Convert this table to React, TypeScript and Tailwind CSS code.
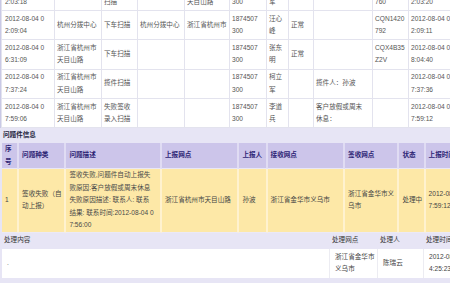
import React from "react";

type Cell = React.ReactNode;

const topRows: Cell[][] = [
  [
    <>2012-08-04 0<br />2:03:18</>,
    "杭州分拨中心",
    <>装车发件<br />扫描</>,
    "",
    <>浙江省杭州市<br />天目山路</>,
    <>1874507<br />300</>,
    <>柯立<br />军</>,
    "正常",
    "",
    <>CQN1418<br />760</>,
    <>2012-08-04 0<br />2:03:20</>,
  ],
  [
    <>2012-08-04 0<br />2:09:04</>,
    "杭州分拨中心",
    "下车扫描",
    "杭州分拨中心",
    "浙江省杭州市",
    <>1874507<br />300</>,
    <>汪心<br />峰</>,
    "正常",
    "",
    <>CQN1420<br />792</>,
    <>2012-08-04 0<br />2:09:11</>,
  ],
  [
    <>2012-08-04 0<br />6:31:09</>,
    <>浙江省杭州市<br />天目山路</>,
    "下车扫描",
    "",
    "",
    <>1874507<br />300</>,
    <>张东<br />明</>,
    "正常",
    "",
    <>CQX4B35<br />Z2V</>,
    <>2012-08-04 0<br />8:04:40</>,
  ],
  [
    <>2012-08-04 0<br />7:37:24</>,
    <>浙江省杭州市<br />天目山路</>,
    "揽件扫描",
    "",
    "",
    <>1874507<br />300</>,
    <>柯立<br />军</>,
    "",
    "揽件人：孙波",
    "",
    <>2012-08-04 0<br />7:37:36</>,
  ],
  [
    <>2012-08-04 0<br />7:59:06</>,
    <>浙江省杭州市<br />天目山路</>,
    <>失败签收<br />录入扫描</>,
    "",
    "",
    <>1874507<br />300</>,
    <>李道<br />兵</>,
    "",
    <>客户放假或周末<br />休息：</>,
    "",
    <>2012-08-04 0<br />7:59:12</>,
  ],
];

const topCols = [
  "w-[52px]",
  "w-[46px]",
  "w-[35px]",
  "w-[46px]",
  "w-[44px]",
  "w-[36px]",
  "w-[21px]",
  "w-[24px]",
  "w-[58px]",
  "w-[35px]",
  "w-[60px]",
];

const probCols = [
  "w-[17px]",
  "w-[47px]",
  "w-[95px]",
  "w-[77px]",
  "w-[28px]",
  "w-[77px]",
  "w-[54px]",
  "w-[26px]",
  "w-[60px]",
];

const probHead: Cell[] = [
  <>序<br />号</>,
  "问题种类",
  "问题描述",
  "上报网点",
  "上报人",
  "接收网点",
  "签收网点",
  "状态",
  "上报时间",
];

const probRow: Cell[] = [
  "1",
  <>签收失败（自<br />动上报）</>,
  <>
    签收失败,问题件自动上报失
    <br />
    败原因:客户放假或周末休息
    <br />
    失败原因描述: 联系人: 联系
    <br />
    结果: 联系时间:2012-08-04 0
    <br />
    7:56:00
  </>,
  "浙江省杭州市天目山路",
  "孙波",
  "浙江省金华市义乌市",
  <>浙江省金华市义<br />乌市</>,
  "处理中",
  <>2012-08-04 0<br />7:59:12</>,
];

export default function App() {
  return (
    <div className="w-[450px] h-[283px] overflow-hidden bg-white font-['Liberation_Sans','Noto_Sans_CJK_SC',sans-serif] text-[6.6px] leading-[12.5px] text-[#555]">
      <div className="border-l-[1.5px] border-[#c9c9e6]">
        <table className="table-fixed border-separate border-spacing-[1px] bg-[#e3e3ee] w-[469px] -mt-[19.3px]">
          <colgroup>
            {topCols.map((c, i) => (
              <col key={i} className={c} />
            ))}
          </colgroup>
          <tbody>
            {topRows.map((r, i) => (
              <tr key={i}>
                {r.map((c, j) => (
                  <td
                    key={j}
                    className={`bg-white ${j === 0 ? "pl-[3px]" : "pl-[2px]"} pr-0 py-[1.65px] align-middle whitespace-nowrap overflow-hidden h-[28.3px]`}
                  >
                    {c}
                  </td>
                ))}
              </tr>
            ))}
          </tbody>
        </table>
      </div>

      <div className="bg-[#e7e5f5] pl-[2px]">
        <div className="h-[15px] flex items-center font-bold text-[#1e1e3c] pl-[1px]">
          问题件信息
        </div>
        <table className="table-fixed border-separate border-spacing-0 w-[484px]">
          <colgroup>
            {probCols.map((c, i) => (
              <col key={i} className={c} />
            ))}
          </colgroup>
          <tbody>
            <tr>
              {probHead.map((c, j) => (
                <td
                  key={j}
                  className="bg-[#ccc5ea] h-[26px] border-r-2 border-b border-r-[#e0dcf3] border-b-[#e9e7f6] pl-[3px] align-middle whitespace-nowrap overflow-hidden font-bold text-[#2c2475]"
                >
                  {c}
                </td>
              ))}
            </tr>
            <tr>
              {probRow.map((c, j) => (
                <td
                  key={j}
                  className={`bg-[#fde8a7] h-[63px] border-r-2 border-b border-r-[#fff2cf] border-b-[#ebe9f6] pl-[3px] align-middle whitespace-nowrap overflow-hidden ${j === 2 ? "text-[#4a4a4a]" : "text-[#444]"}`}
                >
                  {c}
                </td>
              ))}
            </tr>
          </tbody>
        </table>

        <table className="table-fixed border-separate border-spacing-0 w-[484px]">
          <colgroup>
            <col className="w-[328px]" />
            <col className="w-[48px]" />
            <col className="w-[46px]" />
            <col className="w-[62px]" />
          </colgroup>
          <tbody>
            <tr>
              {["处理内容", "处理网点", "处理人", "处理时间"].map((c, j) => (
                <td
                  key={j}
                  className="h-[16px] pl-[2px] align-middle whitespace-nowrap overflow-hidden text-[#333] border-b border-b-[#e7e5f5]"
                >
                  {c}
                </td>
              ))}
            </tr>
            <tr>
              <td className="bg-white h-[29px] pl-[5px] align-middle text-[#666] border-r border-r-[#ececf2]">
                .
              </td>
              <td className="bg-white pl-[5px] align-middle whitespace-nowrap overflow-hidden text-[#444] border-r border-r-[#ececf2]">
                浙江省金华市
                <br />
                义乌市
              </td>
              <td className="bg-white pl-[5px] align-middle whitespace-nowrap overflow-hidden text-[#444] border-r border-r-[#ececf2]">
                陈瑞云
              </td>
              <td className="bg-white pl-[5px] align-middle whitespace-nowrap overflow-hidden text-[#444]">
                2012-08-04 1
                <br />
                4:25:23
              </td>
            </tr>
          </tbody>
        </table>
        <div className="h-[10px]" />
      </div>
    </div>
  );
}
